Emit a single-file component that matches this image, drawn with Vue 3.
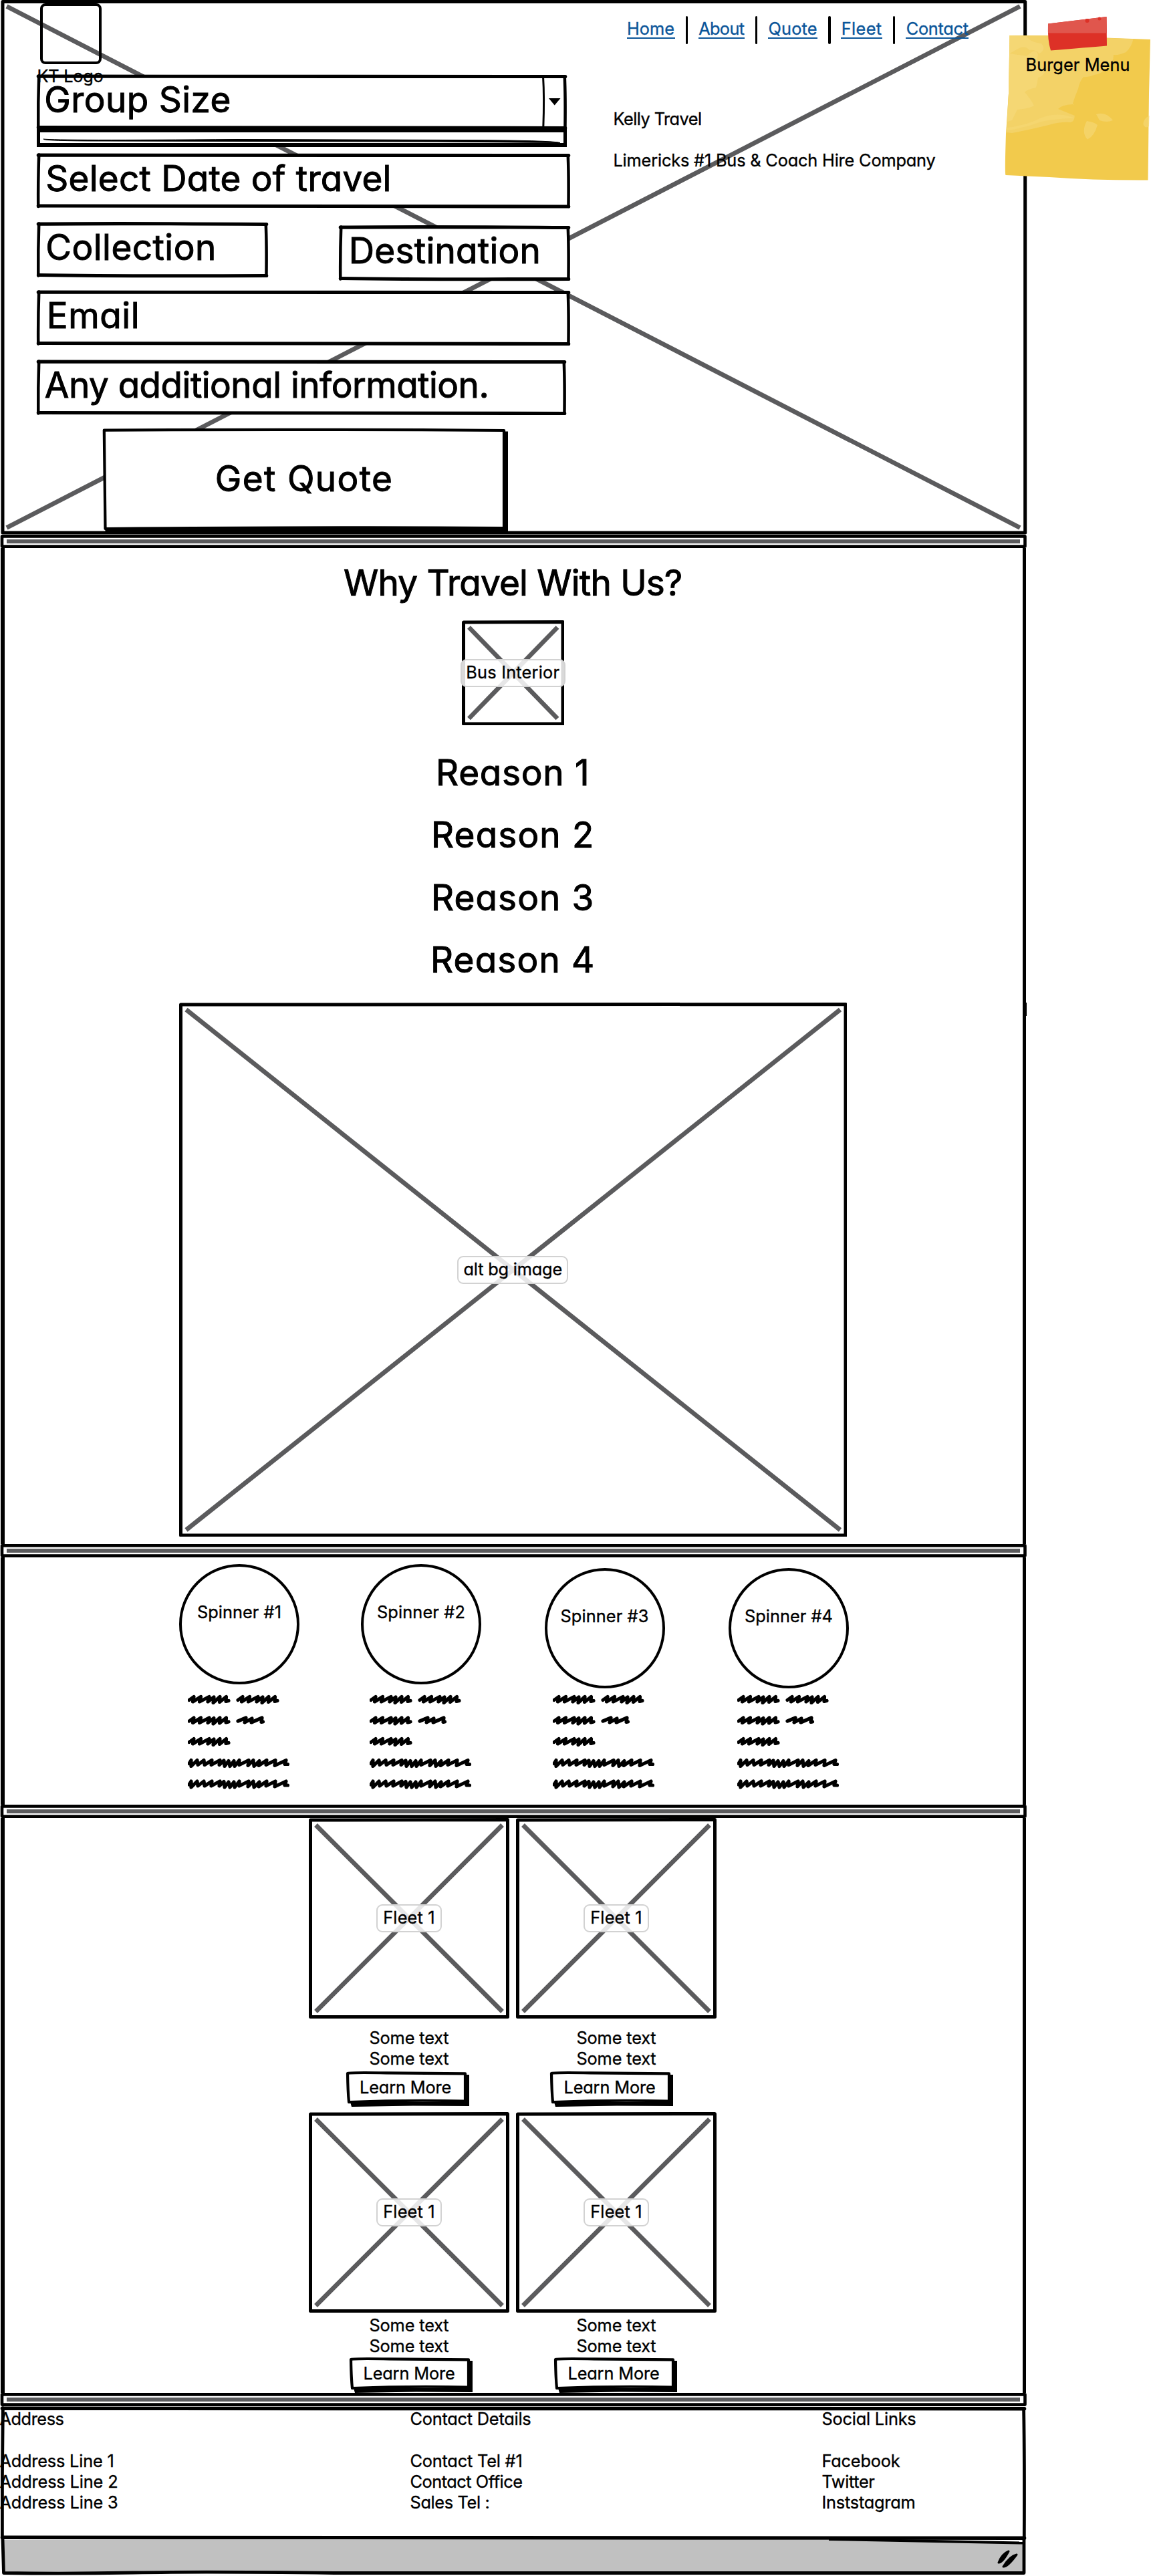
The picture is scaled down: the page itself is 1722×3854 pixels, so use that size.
<script setup>
import { h } from 'vue'

// Spreads a label's letters so that its ink spans the given width in pixels.
const vFit = {
  mounted(el, { value }) {
    const size = parseFloat(getComputedStyle(el).fontSize)
    const natural = el.getBoundingClientRect().width
    el.style.letterSpacing = (value + size * 0.12 - natural) / el.textContent.length + 'px'
  },
}

const INK = '#000'
const GREY = '#5b5b5d'

// Hand-drawn rectangle: four slightly bowed strokes over a white fill.
const Frame = ({ w, h: ht, t = 5.1, s = 4.5, bow = 1, fill = '#fff' }) => {
  const a = t / 2
  const b = s / 2
  const edge = (d, width) =>
    h('path', { d, fill: 'none', stroke: INK, 'stroke-width': width, 'stroke-linecap': 'round' })
  return h('svg', { width: w, height: ht, viewBox: `0 0 ${w} ${ht}` }, [
    h('rect', { x: b, y: a, width: w - s, height: ht - t, fill }),
    edge(`M${b} ${a + bow * 0.6} Q${w * 0.35} ${a - bow * 0.6} ${w - b} ${a + bow}`, t),
    edge(`M${b} ${ht - a - bow} Q${w * 0.35} ${ht - a + bow * 0.8} ${w - b} ${ht - a}`, t),
    edge(`M${b + bow} ${a} Q${b - bow * 0.4} ${ht / 2} ${b} ${ht - a}`, s),
    edge(`M${w - b - bow} ${a + bow} Q${w - b + bow * 0.3} ${ht * 0.4} ${w - b - bow * 0.3} ${ht - a}`, s),
  ])
}
Frame.props = ['w', 'h', 't', 's', 'bow', 'fill']

// Image placeholder: frame with a diagonal cross.
const Picture = ({ w, h: ht }) =>
  h('svg', { width: w, height: ht, viewBox: `0 0 ${w} ${ht}` }, [
    h('path', {
      d: `M10.5 10.5 L${w - 10.5} ${ht - 10.5} M${w - 10.5} 10.5 L10.5 ${ht - 10.5}`,
      stroke: GREY,
      'stroke-width': 6.8,
    }),
    h('path', {
      d: `M2.5 3 L${w - 2.5} 2.5 V${ht - 2.5} H2.5 Z`,
      fill: 'none',
      stroke: INK,
      'stroke-width': 5,
      'stroke-linejoin': 'round',
    }),
  ])
Picture.props = ['w', 'h']

const Divider = () =>
  h('svg', { width: 1537, height: 20, viewBox: '0 0 1537 20' }, [
    h('path', { d: 'M3 2.4 H1533.5 V17.6 H3 Z', fill: '#fff', stroke: INK, 'stroke-width': 4.6, 'stroke-linejoin': 'round' }),
    h('rect', { x: 10, y: 7, width: 1516, height: 6, fill: GREY }),
  ])

// Scribbled words as x, y pairs around the line's centre.
const medium = [2, 1, 9, -4, 7.5, 3.5, 19.5, -4, 17.5, 3.5, 32, -4, 30, 3.5, 39, -3.5, 38, 5, 48, -4, 47.5, 4, 57.5, -4, 57, 3, 61, 2]
const short = [2, 1, 14, -4, 12, 3, 23, -3, 22, 3, 38, -4, 37, 2.5, 39.5, 2]
const long = [
  2, 1, 5, -4, 5, 5, 14, -4, 15, 3, 24, -4, 25, 3, 36, -4, 35, 3, 48, -4, 47, 3, 54, -3.5, 55, 5, 61, -3, 63, 5, 69, -3,
  70, 5, 77, -4, 77, 3, 91, -4, 90, 4, 98, -4, 99, 5, 107, -3, 106, 4, 118, -4, 117, 3, 131, -4, 130, 4, 147, -4, 145, 2,
  149.5, 2,
]
const word = (pts, x, y) => {
  let d = ''
  for (let i = 0; i < pts.length; i += 2) d += `${i ? 'L' : 'M'}${pts[i] + x} ${pts[i + 1] + y} `
  return d
}
const scribble = [
  word(medium, 0, 7.5),
  word(medium, 73, 7.5),
  word(medium, 0, 39),
  word(short, 73, 39),
  word(medium, 0, 70.5),
  word(long, 0, 102.5),
  word(long, 0, 134),
].join('')

const links = [
  { text: 'Home', w: 68 },
  { text: 'About', w: 65.2 },
  { text: 'Quote', w: 70 },
  { text: 'Fleet', w: 57.7 },
  { text: 'Contact', w: 90 },
]
const reasons = [
  { text: 'Reason 1', w: 224 },
  { text: 'Reason 2', w: 238 },
  { text: 'Reason 3', w: 238 },
  { text: 'Reason 4', w: 240 },
]
const spinners = [
  { text: 'Spinner #1', w: 123 },
  { text: 'Spinner #2', w: 129 },
  { text: 'Spinner #3', w: 129, low: true },
  { text: 'Spinner #4', w: 129, low: true },
]
const fleet = [
  { id: 1, shift: 55.6 },
  { id: 2, shift: 51 },
  { id: 3, shift: 61, second: true },
  { id: 4, shift: 57, second: true },
]
const columns = [
  [['Address', 93], null, ['Address Line 1', 168], ['Address Line 2', 174], ['Address Line 3', 174]],
  [['Contact Details', 178], null, ['Contact Tel #1', 165], ['Contact Office', 165], ['Sales Tel :', 116]],
  [['Social Links', 138], null, ['Facebook', 114], ['Twitter', 76], ['Inststagram', 137]],
]
</script>

<template>
  <div class="page">
    <main class="site">
      <header class="hero">
        <svg class="backdrop" width="1537" height="800" viewBox="0 0 1537 800">
          <path d="M10 9.5 L1526 789.5 M1526 9.5 L10 789.5" stroke="#5b5b5d" stroke-width="6.8" />
          <path d="M4 2.6 H1533.7 V797 H4 Z" fill="none" stroke="#000" stroke-width="5" stroke-linejoin="round" />
        </svg>
        <div class="left">
          <div class="brand">
            <div class="logo"></div>
            <span class="t" v-fit="96">KT Logo</span>
          </div>
          <form class="form" @submit.prevent>
            <div class="field group">
              <Frame class="bg" :w="793" :h="83" />
              <span class="t" v-fit="273">Group Size</span>
              <svg class="arrow" width="37" height="83" viewBox="0 0 37 83">
                <path d="M1.5 3 Q3.5 35 1.8 80" fill="none" stroke="#000" stroke-width="3" />
                <path d="M10 36 H27.5 L18.7 46.5 Z" />
              </svg>
            </div>
            <svg class="list" width="793" height="30" viewBox="0 0 793 30">
              <path d="M0 0 H793 V30 H0 Z" fill="#fff" />
              <path d="M0 0 H793 V30 H0 Z M5 8 V24 H788 V8 Z" fill-rule="evenodd" />
              <path d="M10 18 Q30 20.5 300 18.5 L640 19.5 Q770 20 783 23.5 L600 22 L100 21 Q10 21 10 18 Z" stroke="#000" />
            </svg>
            <div class="field date">
              <Frame class="bg" :w="798" :h="82.5" />
              <span class="t" v-fit="511">Select Date of travel</span>
            </div>
            <div class="pair">
              <div class="field short">
                <Frame class="bg" :w="346" :h="83" />
                <span class="t" v-fit="249">Collection</span>
              </div>
              <div class="field short dest">
                <Frame class="bg" :w="346" :h="83" />
                <span class="t" v-fit="281">Destination</span>
              </div>
            </div>
            <div class="field email">
              <Frame class="bg" :w="798" :h="83" />
              <span class="t" v-fit="133">Email</span>
            </div>
            <div class="field info">
              <Frame class="bg" :w="792" :h="83" />
              <span class="t" v-fit="658">Any additional information.</span>
            </div>
            <div class="quote">
              <svg class="bg" width="606" height="159" viewBox="0 0 606 159">
                <path d="M597 4.5 H606 V154.5 H597 Z M3 149 L597 147.5 V154.5 L340 158 H4 Z" />
                <path d="M1.8 2.6 Q300 1 600 3 V149 Q350 147.5 3.5 150 Z" fill="#fff" stroke="#000" stroke-width="4.2" stroke-linejoin="round" />
              </svg>
              <span class="t" v-fit="260">Get Quote</span>
            </div>
          </form>
        </div>
        <div class="right">
          <nav class="nav">
            <template v-for="(l, i) in links" :key="l.text">
              <i v-if="i" class="sep"></i>
              <a class="link"><span class="t" v-fit="l.w">{{ l.text }}</span></a>
            </template>
          </nav>
          <p class="name"><span class="t" v-fit="129">Kelly Travel</span></p>
          <p class="tagline"><span class="t" v-fit="479">Limericks #1 Bus &amp; Coach Hire Company</span></p>
        </div>
      </header>

      <Divider class="divider" />

      <section class="panel why">
        <h1 class="title"><span class="t" v-fit="500">Why Travel With Us?</span></h1>
        <figure class="image bus">
          <Picture :w="153.5" :h="157.5" />
          <figcaption class="tag tag-bus"><span class="t" v-fit="137">Bus Interior</span></figcaption>
        </figure>
        <ul class="reasons">
          <li v-for="r in reasons" :key="r.text"><span class="t" v-fit="r.w">{{ r.text }}</span></li>
        </ul>
        <figure class="image">
          <Picture :w="999.5" :h="799.5" />
          <figcaption class="tag tag-alt"><span class="t" v-fit="144.5">alt bg image</span></figcaption>
        </figure>
        <i class="nub"></i>
      </section>

      <Divider class="divider" />

      <section class="panel spinners">
        <div v-for="s in spinners" :key="s.text" class="spinner">
          <div class="slot" :class="{ low: s.low }">
            <div class="circle"><span class="t" v-fit="s.w">{{ s.text }}</span></div>
          </div>
          <svg class="scribble" width="154" height="144" viewBox="0 0 154 144">
            <path :d="scribble" fill="none" stroke="#000" stroke-width="5.2" stroke-linecap="round" stroke-linejoin="round" />
          </svg>
        </div>
      </section>

      <Divider class="divider" />

      <section class="panel fleet">
        <article v-for="f in fleet" :key="f.id" class="card" :class="{ second: f.second }">
          <figure class="image">
            <Picture :w="300" :h="300" />
            <figcaption class="tag tag-fleet"><span class="t" v-fit="74.5">Fleet 1</span></figcaption>
          </figure>
          <p class="copy">
            <span class="t" v-fit="116">Some text</span><br />
            <span class="t" v-fit="116">Some text</span>
          </p>
          <div class="more" :style="{ marginLeft: f.shift + 'px' }">
            <svg class="bg" width="184" height="53" viewBox="0 0 184 53">
              <path d="M175 5 H184 V52 L100 51.5 L8 53 L6 46 H175 Z" />
              <path d="M2 3 Q8 1.4 60 2.4 L178 3.4 V44.5 Q90 42.5 4 46 Q2.4 30 2 3 Z" fill="#fff" stroke="#000" stroke-width="4.2" stroke-linejoin="round" />
            </svg>
            <span class="t" v-fit="134">Learn More</span>
          </div>
        </article>
      </section>

      <Divider class="divider" />

      <footer class="footer">
        <Frame class="bg foot-frame" :w="1534" :h="200" :t="5.4" :s="4.8" />
        <div v-for="(c, i) in columns" :key="i" class="col">
          <p v-for="(line, j) in c" :key="j"><span v-if="line" class="t" v-fit="line[1]">{{ line[0] }}</span></p>
        </div>
      </footer>
      <div class="status">
        <svg width="1537" height="54" viewBox="0 0 1537 54">
          <path d="M4 0 H1340 L1532 4.5 V49 H5 Z" fill="#c1c1c1" />
          <path d="M4 -2 L5.5 49.5 Q100 51 200 49 T500 49.5 H1532 V-2" fill="none" stroke="#000" stroke-width="4.8" stroke-linejoin="round" />
          <path d="M1240 -1 L1532 4.6" stroke="#000" stroke-width="4" />
          <path d="M1509 17 Q1499 21 1494 34 Q1500 34 1509 17 Z M1521 22 Q1511 24 1501 40 Q1507 41 1521 22 Z" stroke="#000" stroke-width="3" stroke-linejoin="round" />
        </svg>
      </div>
    </main>

    <aside class="note">
      <svg class="bg" width="222" height="250" viewBox="0 0 222 250">
        <path d="M10.5 33 L60 33 L221 39 L219 120 L217.5 249.5 Q140 250 70 245 L4.5 242 Q3 240 5 180 L9 120 Z" fill="#f2ca4c" />
        <path d="M10.5 33 L60 33 L195.5 38.500 Q193 50 184.600 58 Q174 63 166 62 Q166 74 157 80 Q148 91 137 92 Q129 96 121 95 Q115 102 113 113 Q108 124 105 135 Q109 139 105 136 Q88 137 83 143 L107.700 153 Q108 161 102 163 Q86 162 69 167 Q36 175 14 179 L5.500 178 L9 120 Z" fill="#f3d267" />
        <path d="M10.500 33 L36 34 Q40 43 58 45 Q66 54 55 60 Q49 54 40 55 Q34 48 25 52 L10.500 60 Z M10.500 60 L36 64 Q50 50 53 62 Q48 80 64 85 Q62 94 53 96 Q52 104 50 111 Q36 114 33 118 Q42 128 47 138 Q42 142 22 144 L14 160 L7 162 L9 120 Z" fill="#f5d97b" opacity=".7" />
        <path d="M6 171 Q34 168 56 157 Q74 150 91 152 Q102 154 107 157 Q84 157 58 162 Q32 172 6 175 Z M140 151 Q154 146 165 160 Q156 164 145 160 Z M126 161 Q138 163 142 167 Q137 184 127 188.500 Q117 178 126 161 Z M219.500 153 Q210 158 210.500 166 Q213 173 219 169 Z" fill="#f5d773" opacity=".7" />
        <path d="M68 15.5 L155.5 5 L156 48.5 Q125 51 72 55.5 Q67 40 68 15.5 Z" fill="#dd3127" />
        <path d="M68 15.5 L155.5 5 L156 29.5 H68 Z" fill="#e0564d" />
        <circle cx="126.500" cy="11" r="3" fill="#dd3127" />
        <circle cx="145" cy="8" r="2.500" fill="#dd3127" />
      </svg>
      <span class="t" v-fit="153">Burger Menu</span>
    </aside>
  </div>
</template>

<style>
html,
body {
  background: #fff;
}
</style>

<style scoped>
.page {
  position: relative;
  width: 1722px;
  height: 3854px;
  overflow: hidden;
  color: #000;
  font-family: Inter, 'Open Sans', sans-serif;
  font-size: 25.3px;
  font-weight: 400;
  line-height: 31.2px;
  font-feature-settings: 'cv11' 1;
  -webkit-text-stroke: 0.35px currentColor;
}
.site {
  display: flex;
  flex-direction: column;
  width: 1537px;
}
p,
h1,
ul,
figure {
  margin: 0;
  padding: 0;
  font: inherit;
}
.t {
  position: relative;
  display: inline-block;
  margin: 0 -0.06em;
  white-space: nowrap;
}
.bg,
.backdrop {
  position: absolute;
  top: 0;
  left: 0;
  overflow: visible;
}
.divider {
  display: block;
  flex: none;
}

/* Hero */
.hero {
  position: relative;
  display: flex;
  height: 800px;
}
.left {
  position: relative;
  flex: none;
  width: 853px;
  box-sizing: border-box;
  padding-left: 55px;
}
.brand {
  position: relative;
  z-index: 1;
  height: 111px;
  box-sizing: border-box;
  padding: 5px 0 0 2px;
}
.logo {
  width: 92px;
  height: 91px;
  margin: 0 0 1.5px 3px;
  box-sizing: border-box;
  border: 4px solid #000;
  border-radius: 8px;
}
.form {
  display: flex;
  flex-direction: column;
}
.form,
.title,
.reasons {
  font-size: 53px;
  line-height: 60px;
  -webkit-text-stroke-width: 1px;
}
.field {
  position: relative;
  height: 83px;
  box-sizing: border-box;
  padding: 8px 0 0 16.5px;
}
.group {
  width: 793px;
  height: 79px;
  padding-left: 14.5px;
}
.arrow {
  position: absolute;
  top: 0;
  right: 0;
}
.list {
  position: relative;
  display: block;
}
.date {
  width: 798px;
  height: 82px;
  margin-top: 9px;
}
.pair {
  display: flex;
  justify-content: space-between;
  width: 798px;
  margin-top: 21px;
}
.short {
  width: 346px;
}
.dest {
  margin-top: 4.5px;
  padding-left: 18px;
}
.email {
  margin-top: 14.5px;
  padding-left: 18px;
}
.info {
  margin-top: 21px;
  padding-left: 15px;
}
.quote {
  position: relative;
  width: 606px;
  height: 159px;
  box-sizing: border-box;
  margin: 19.5px 0 0 99px;
  padding: 45.5px 0 0 171px;
}
.right {
  position: relative;
  padding: 23.5px 0 0 66px;
}
.nav {
  display: flex;
  align-items: flex-start;
  height: 42.5px;
  margin-left: 18.5px;
  color: #0a5599;
}
.link {
  height: 29px;
  margin-top: 3.5px;
  padding: 0 2px;
  border-bottom: 2px solid #0a5599;
}
.sep {
  width: 3.5px;
  height: 42px;
  margin: 0 15.7px 0 16px;
  border-radius: 2px;
  background: #000;
}
.name {
  margin-top: 95.5px;
}
.tagline {
  margin-top: 31px;
}

/* Shared panels */
.panel {
  position: relative;
  box-sizing: border-box;
  width: 1533.5px;
  margin-left: 1px;
  border-left: 6px solid #000;
  border-right: 5px solid #000;
}
.image {
  position: relative;
  display: flex;
  align-items: center;
  justify-content: center;
}
.tag {
  position: absolute;
  display: flex;
  justify-content: center;
  height: 42px;
  box-sizing: border-box;
  padding-top: 2px;
  border: 2px solid #d2d2d2;
  border-radius: 9px;
  background: rgba(255, 255, 255, 0.85);
}
.tag-bus {
  width: 157px;
}
.tag-alt {
  width: 166px;
}
.tag-fleet {
  width: 98px;
}

/* Reasons */
.why {
  display: flex;
  flex-direction: column;
  align-items: center;
  height: 1490px;
  padding: 22.4px 2px 0 0;
}
.bus {
  margin-top: 25.5px;
}
.reasons {
  margin: 24.5px 0 16px;
  list-style: none;
  line-height: 93.5px;
  text-align: center;
}
.nub {
  position: absolute;
  top: 680px;
  right: -6px;
  width: 5px;
  height: 20px;
  background: #000;
}

/* Spinners */
.spinners {
  display: grid;
  grid-template-columns: 272px 274.5px 275.5px 180px;
  height: 370px;
  padding-left: 261px;
}
.slot {
  height: 205px;
  box-sizing: border-box;
  padding-top: 10px;
}
.low {
  padding-top: 16px;
}
.circle {
  width: 180px;
  height: 180px;
  box-sizing: border-box;
  padding-top: 52px;
  border: 4px solid #000;
  border-radius: 50%;
  text-align: center;
}
.scribble {
  display: block;
  margin-left: 12.5px;
}

/* Fleet */
.fleet {
  display: grid;
  grid-template-columns: 300px 300px;
  grid-template-rows: 440px 420px;
  column-gap: 10px;
  height: 860px;
  padding-left: 455px;
}
.copy {
  margin-top: 12.5px;
  line-height: 31.6px;
  text-align: center;
}
.second .copy {
  margin-top: 2.5px;
}
.more {
  position: relative;
  width: 184px;
  height: 53px;
  box-sizing: border-box;
  margin-top: 3px;
  padding: 8px 0 0 22px;
}
.second .more {
  margin-top: 1.5px;
}

/* Footer */
.footer {
  position: relative;
  display: grid;
  grid-template-columns: 614px 616px 1fr;
  height: 200px;
  box-sizing: border-box;
  padding: 3.2px 0 0 1px;
}
.foot-frame {
  left: 1px;
}
.col p {
  height: 31.2px;
}
.status {
  height: 54px;
}
.status svg {
  display: block;
  overflow: visible;
}

/* Sticky note */
.note {
  position: absolute;
  top: 20px;
  left: 1500px;
  width: 222px;
  height: 250px;
  box-sizing: border-box;
  padding: 61px 0 0 36px;
}
</style>
